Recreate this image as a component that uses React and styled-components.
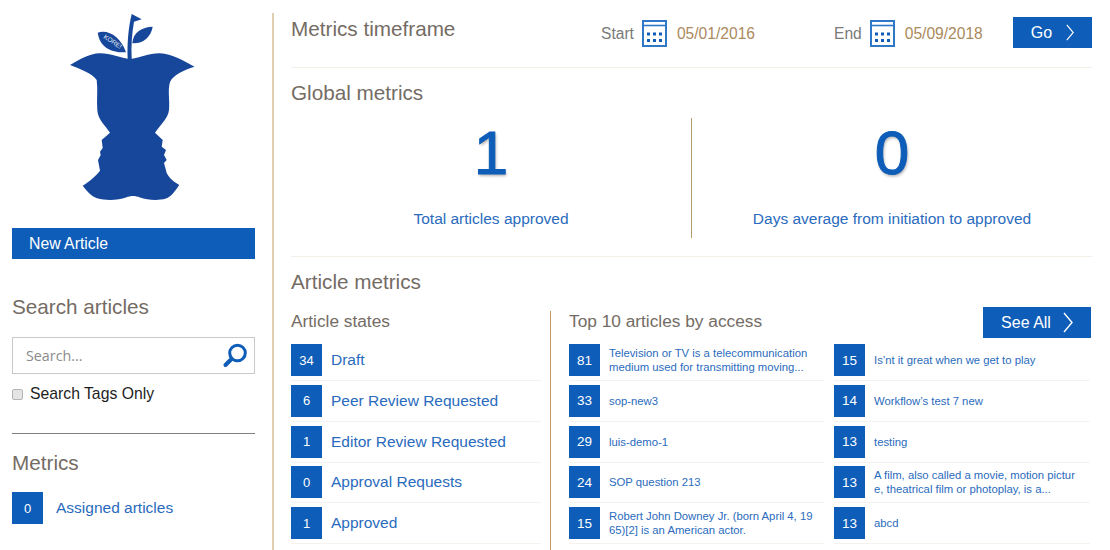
import styled, { createGlobalStyle } from 'styled-components';

const GlobalStyle = createGlobalStyle`
  html, body {
    margin: 0;
    padding: 0;
    background: #fff;
    overflow: hidden;
  }
  * {
    box-sizing: border-box;
  }
  body {
    font-family: "Liberation Sans", Arial, sans-serif;
  }
`;

const BLUE = '#0e5db8';
const LINK = '#2a6bbd';
const HEADING = '#746c64';
const TAN = '#c39a63';

const states = [
  { count: 34, label: 'Draft' },
  { count: 6, label: 'Peer Review Requested' },
  { count: 1, label: 'Editor Review Requested' },
  { count: 0, label: 'Approval Requests' },
  { count: 1, label: 'Approved' },
];

const topLeft = [
  { count: 81, label: 'Television or TV is a telecommunication medium used for transmitting moving...' },
  { count: 33, label: 'sop-new3' },
  { count: 29, label: 'luis-demo-1' },
  { count: 24, label: 'SOP question 213' },
  { count: 15, label: 'Robert John Downey Jr. (born April 4, 1965)[2] is an American actor.' },
];

const topRight = [
  { count: 15, label: 'Is’nt it great when we get to play' },
  { count: 14, label: 'Workflow’s test 7 new' },
  { count: 13, label: 'testing' },
  { count: 13, label: 'A film, also called a movie, motion picture, theatrical film or photoplay, is a...' },
  { count: 13, label: 'abcd' },
];

function Logo() {
  return (
    <LogoSvg viewBox="12 13 243 215">
      <path
        fill="#17479b"
        d="M70 65 C79 60 89 53.500 100 53.300 C110 53.200 121 58 130 59 C139 58 150 53 160 53.300 C172 54 184 61 194.500 66.700
           C184 70 173 75 170 82 C167.500 90 170 101 169 110 C168 119 160 125 155 132.700 L162.700 140 L161.700 146.700
           L166 150 L164 155 L166.700 160 L164 163 L166.700 173 C169 178 174 182 179.300 185 C175 191 171 197 166 198.500
           C158 201 147 200 140 197.500 C135 195.500 131 195.500 126 197.500 C119 200 107 201 97 198.300
           C91 196 87 191 82.700 185.700 C89 182 96 176 100 170.700 L98 160 L100.700 155 L100 151.700 L102.700 148 L101.700 140 L110 132.700
           C105 125 98 120 97.300 110 C96.500 100 98 90 96.700 80 C92 73 80 69 70 65 Z"
      />
      <path
        fill="#17479b"
        d="M127.700 59 C127 43 128.500 27 131.700 14 L141.700 19.300 L134 21.700 C132 33 131 46 131.700 59 Z"
      />
      <path fill="#17479b" d="M132.300 43.300 C133 32 142 27 152.700 26.700 C151 37 143 44 132.300 43.300 Z" />
      <path fill="#17479b" d="M97.700 32.700 C108 29 121 37 126 52.300 C112 53 100 48 97.700 32.700 Z" />
      <LeafText x="0" y="0" transform="translate(103 38) rotate(33)">KORE!</LeafText>
    </LogoSvg>
  );
}

function Chevron({ width, height }) {
  return (
    <svg width={width} height={height} viewBox="0 0 10 20" fill="none" preserveAspectRatio="none">
      <polyline points="1,1 9,10 1,19" stroke="#fff" strokeWidth="1.4" />
    </svg>
  );
}

function CalendarIcon() {
  const dots = [];
  for (let y of [12.5, 19]) {
    for (let x of [5, 11, 17]) {
      dots.push(<rect key={`${x}-${y}`} x={x} y={y} width="3" height="3" fill={BLUE} />);
    }
  }
  return (
    <CalendarSvg width="25" height="27" viewBox="0 0 25 27" fill="none">
      <rect x="1" y="1" width="23" height="25" stroke="#2f78c8" strokeWidth="2" />
      <line x1="1" y1="5.500" x2="24" y2="5.500" stroke="#2f78c8" strokeWidth="1.600" />
      {dots}
    </CalendarSvg>
  );
}

function SearchIcon() {
  return (
    <svg width="26" height="26" viewBox="0 0 26 26" fill="none">
      <circle cx="15.500" cy="10" r="7.800" stroke={BLUE} strokeWidth="3" />
      <line x1="9.500" y1="16" x2="3.500" y2="22" stroke={BLUE} strokeWidth="4" strokeLinecap="round" />
    </svg>
  );
}

export default function App() {
  return (
    <>
      <GlobalStyle />
      <Page>
        <Sidebar>
          <Logo />
          <NewArticle>New Article</NewArticle>
          <SearchTitle>Search articles</SearchTitle>
          <SearchBox>
            <SearchInput placeholder="Search..." />
            <SearchIcon />
          </SearchBox>
          <TagsLabel>
            <TagsCheck type="checkbox" />
            Search Tags Only
          </TagsLabel>
          <SideRule />
          <MetricsTitle>Metrics</MetricsTitle>
          <AssignedRow>
            <Badge>0</Badge>
            <RowLabel>Assigned articles</RowLabel>
          </AssignedRow>
        </Sidebar>

        <Main>
          <Timeframe>
            <Heading>Metrics timeframe</Heading>
            <DateGroup>
              <DatePart>
                <DateName>Start</DateName>
                <CalendarIcon />
                <DateValue>05/01/2016</DateValue>
              </DatePart>
              <DatePart>
                <DateName>End</DateName>
                <CalendarIcon />
                <DateValue>05/09/2018</DateValue>
              </DatePart>
              <ActionButton $width={79} $gap={14}>
                Go
                <Chevron width={8} height={17} />
              </ActionButton>
            </DateGroup>
          </Timeframe>

          <GlobalSection>
            <Heading>Global metrics</Heading>
            <StatsRow>
              <Stat>
                <StatNumber>1</StatNumber>
                <StatLabel>Total articles approved</StatLabel>
              </Stat>
              <Stat $divided>
                <StatNumber>0</StatNumber>
                <StatLabel>Days average from initiation to approved</StatLabel>
              </Stat>
            </StatsRow>
          </GlobalSection>

          <ArticleSection>
            <Heading>Article metrics</Heading>
            <ArticleColumns>
              <StatesColumn>
                <SubHeading>Article states</SubHeading>
                <RowList $top={14}>
                  {states.map((s) => (
                    <Row key={s.label}>
                      <Badge>{s.count}</Badge>
                      <RowLabel>{s.label}</RowLabel>
                    </Row>
                  ))}
                </RowList>
              </StatesColumn>
              <TopColumn>
                <TopHeader>
                  <TopTitle>Top 10 articles by access</TopTitle>
                  <ActionButton $width={108} $gap={12}>
                    See All
                    <Chevron width={10} height={21} />
                  </ActionButton>
                </TopHeader>
                <TopGrid>
                  {[topLeft, topRight].map((list, i) => (
                    <RowList key={i} $top={6}>
                      {list.map((a) => (
                        <Row key={a.label}>
                          <TopBadge>{a.count}</TopBadge>
                          <ArticleLabel>{a.label}</ArticleLabel>
                        </Row>
                      ))}
                    </RowList>
                  ))}
                </TopGrid>
              </TopColumn>
            </ArticleColumns>
          </ArticleSection>
        </Main>
      </Page>
    </>
  );
}

const Page = styled.div`
  display: flex;
  width: 1110px;
  height: 550px;
  padding-top: 13px;
  overflow: hidden;
`;

const Sidebar = styled.aside`
  width: 274px;
  flex-shrink: 0;
  padding: 0 17px 0 12px;
  border-right: 2px solid #e2cfb2;
`;

const LogoSvg = styled.svg`
  display: block;
  width: 243px;
  height: 215px;
`;

const LeafText = styled.text`
  font-family: "Liberation Sans", Arial, sans-serif;
  font-size: 6.500px;
  fill: #e4ebf6;
`;

const NewArticle = styled.div`
  height: 31px;
  padding-left: 17px;
  line-height: 31px;
  font-size: 15.800px;
  color: #fff;
  background: ${BLUE};
`;

const Heading = styled.h2`
  margin: 0;
  font-size: 20.700px;
  font-weight: 400;
  line-height: 24px;
  color: ${HEADING};
`;

const SearchTitle = styled(Heading)`
  margin-top: 36px;
`;

const SearchBox = styled.div`
  display: flex;
  align-items: center;
  justify-content: space-between;
  height: 37px;
  margin-top: 18px;
  padding: 0 6px 0 13px;
  border: 1px solid #c9c9c9;
`;

const SearchInput = styled.input`
  width: 180px;
  border: 0;
  padding: 0;
  outline: none;
  font-family: "Open Sans", sans-serif;
  font-size: 14.300px;
  color: #555;
  &::placeholder {
    color: #8a8a8a;
    opacity: 1;
  }
`;

const TagsLabel = styled.label`
  display: flex;
  align-items: center;
  gap: 7px;
  margin-top: 11px;
  font-size: 15.750px;
  line-height: 18px;
  color: #1d1d1d;
`;

const TagsCheck = styled.input`
  appearance: none;
  width: 11px;
  height: 11px;
  margin: 0;
  border: 1px solid #b5b5b5;
  border-radius: 2px;
  background: #e4e4e4;
`;

const SideRule = styled.div`
  height: 1px;
  margin-top: 30px;
  background: #808080;
`;

const MetricsTitle = styled(Heading)`
  margin-top: 17px;
`;

const AssignedRow = styled.div`
  display: flex;
  align-items: center;
  gap: 13px;
  margin-top: 17px;
`;

const Badge = styled.span`
  display: flex;
  align-items: center;
  justify-content: center;
  flex-shrink: 0;
  width: 31px;
  height: 32px;
  font-size: 13px;
  color: #fff;
  background: ${BLUE};
`;

const TopBadge = styled(Badge)`
  font-size: 13.500px;
`;

const RowLabel = styled.span`
  font-size: 15.500px;
  color: ${LINK};
`;

const Main = styled.main`
  width: 818px;
  padding-left: 17px;
`;

const Timeframe = styled.div`
  display: flex;
  justify-content: space-between;
  height: 55px;
  padding-top: 4px;
  border-bottom: 1px solid #f4eee8;
`;

const DateGroup = styled.div`
  display: flex;
  align-items: flex-start;
  width: 491px;
`;

const DatePart = styled.div`
  display: flex;
  align-items: center;
  gap: 8px;
  width: 233px;
  height: 27px;
  margin-top: 3px;
  &:nth-child(2) {
    width: 179px;
  }
`;

const DateName = styled.span`
  font-size: 15.600px;
  color: #7a7a7a;
`;

const CalendarSvg = styled.svg`
  flex-shrink: 0;
`;

const DateValue = styled.span`
  margin-left: 2px;
  font-size: 15.600px;
  color: #ab8a5e;
`;

const ActionButton = styled.div`
  display: flex;
  align-items: center;
  justify-content: center;
  gap: ${(p) => p.$gap}px;
  flex-shrink: 0;
  width: ${(p) => p.$width}px;
  height: 31px;
  font-size: 16px;
  color: #fff;
  background: ${BLUE};
`;

const GlobalSection = styled.section`
  height: 189px;
  padding-top: 13px;
  border-bottom: 1px solid #f4eee8;
`;

const StatsRow = styled.div`
  display: flex;
  margin-top: 13px;
`;

const Stat = styled.div`
  flex: 1;
  height: 120px;
  text-align: center;
  border-left: ${(p) => (p.$divided ? `1px solid #b59a6c` : '0')};
`;

const StatNumber = styled.div`
  height: 91px;
  font-size: 62px;
  line-height: 69px;
  color: ${BLUE};
  -webkit-text-stroke: 1px ${BLUE};
  text-shadow: 1px 2px 3px rgba(0, 0, 0, 0.3);
`;

const StatLabel = styled.div`
  font-size: 15.500px;
  line-height: 20px;
  color: ${LINK};
`;

const ArticleSection = styled.section`
  padding-top: 13px;
`;

const ArticleColumns = styled.div`
  display: flex;
  margin-top: 17px;
`;

const StatesColumn = styled.div`
  width: 260px;
  height: 240px;
  padding: 1px 9px 0 0;
  border-right: 1px solid ${TAN};
`;

const SubHeading = styled.h3`
  margin: 0;
  font-size: 17.300px;
  font-weight: 400;
  line-height: 18px;
  color: ${HEADING};
`;

const TopTitle = styled(SubHeading)`
  margin-top: 5px;
`;

const RowList = styled.div`
  display: flex;
  flex-direction: column;
  margin-top: ${(p) => p.$top}px;
  min-width: 0;
`;

const Row = styled.div`
  display: flex;
  align-items: center;
  gap: 9px;
  flex-shrink: 0;
  padding-bottom: 4px;
  margin-bottom: 3.750px;
  border-bottom: 1px solid #f6f2ed;
`;

const TopColumn = styled.div`
  flex: 1;
  padding-left: 18px;
`;

const TopHeader = styled.div`
  display: flex;
  align-items: flex-start;
  justify-content: space-between;
  width: 522px;
  margin-top: -4px;
`;

const TopGrid = styled.div`
  display: grid;
  grid-template-columns: 255px 256px;
  column-gap: 10px;
`;

const ArticleLabel = styled.span`
  width: 206px;
  font-size: 11.300px;
  line-height: 14px;
  color: ${LINK};
  word-break: break-all;
`;
